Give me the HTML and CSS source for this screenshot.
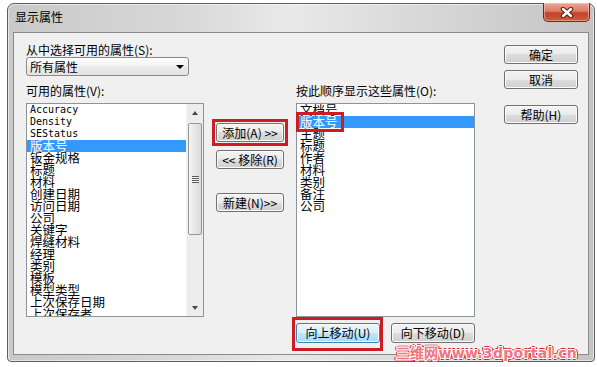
FILE: index.html
```html
<!DOCTYPE html>
<html lang="zh-CN">
<head>
    <meta charset="UTF-8">
    <title>显示属性</title>
    <link rel="stylesheet" href="styles.css">
</head>
<body>
    <div class="window">
        <div class="titlebar">
            <span class="title">显示属性</span>
            <span class="close">
                <svg width="14" height="11" viewBox="0 0 14 11">
                    <path d="M3 2 L11 9 M11 2 L3 9" stroke="#5a1c12" stroke-width="4.4" stroke-linecap="round"/>
                    <path d="M3 2 L11 9 M11 2 L3 9" stroke="#fff" stroke-width="2.4" stroke-linecap="round"/>
                </svg>
            </span>
        </div>
        <div class="client">
            <div class="main">
                <div class="picker">
                    <label>从中选择可用的属性(S):</label>
                    <div class="combo"><span>所有属性</span><span class="caret"></span></div>
                </div>
                <div class="lists">
                    <div class="cap">可用的属性(V):</div>
                    <div class="cap cap-right">按此顺序显示这些属性(O):</div>

                    <div class="listbox scrolled">
                        <ul class="items">
                            <li class="en">Accuracy</li>
                            <li class="en">Density</li>
                            <li class="en">SEStatus</li>
                            <li class="sel">版本号</li>
                            <li>钣金规格</li>
                            <li>标题</li>
                            <li>材料</li>
                            <li>创建日期</li>
                            <li>访问日期</li>
                            <li>公司</li>
                            <li>关键字</li>
                            <li>焊缝材料</li>
                            <li>经理</li>
                            <li>类别</li>
                            <li>模板</li>
                            <li>模型类型</li>
                            <li>上次保存日期</li>
                            <li>上次保存者</li>
                        </ul>
                        <div class="vscroll">
                            <span class="arrow"><span class="tri-up"></span></span>
                            <span class="thumb"><span class="grip"></span></span>
                            <span class="track"></span>
                            <span class="arrow"><span class="tri-down"></span></span>
                        </div>
                    </div>

                    <div class="mid">
                        <span class="mark mark-add"><button class="btn btn-mid">添加(A) &gt;&gt;</button></span>
                        <button class="btn btn-mid btn-remove">&lt;&lt; 移除(R)</button>
                        <button class="btn btn-mid btn-new">新建(N)&gt;&gt;</button>
                    </div>

                    <div class="listbox">
                        <ul class="items">
                            <li>文档号</li>
                            <li class="sel mark mark-row">版本号</li>
                            <li>主题</li>
                            <li>标题</li>
                            <li>作者</li>
                            <li>材料</li>
                            <li>类别</li>
                            <li>备注</li>
                            <li>公司</li>
                        </ul>
                    </div>

                    <div class="moves">
                        <span class="mark mark-up"><button class="btn btn-move hot">向上移动(U)</button></span>
                        <button class="btn btn-move">向下移动(D)</button>
                    </div>
                </div>
            </div>
            <div class="side">
                <button class="btn btn-side">确定</button>
                <button class="btn btn-side">取消</button>
                <button class="btn btn-side btn-help">帮助(H)</button>
            </div>
        </div>
        <div class="watermark">三维网www.3dportal.cn</div>
    </div>
</body>
</html>
```

FILE: styles.css
```css
body {
    margin: 0;
    background-color: #fff;
    font-family: "Noto Sans CJK SC", "Noto Sans", sans-serif;
    font-size: 12px;
    color: #000;
}

.window {
    position: relative;
    width: 588px;
    height: 359px;
    margin: 3px 0 0 7px;
    box-sizing: border-box;
    border: 1px solid #5e5e5e;
    border-radius: 7px 7px 4px 4px;
    background: linear-gradient(90deg, #c9c9c9 0%, #d8d8d8 30%, #e9e9e9 48%, #dadada 68%, #c4c4c4 100%);
    box-shadow: inset 0 0 0 1px rgba(255, 255, 255, 0.55);
    display: flex;
    flex-direction: column;
}

.titlebar {
    height: 28px;
    display: flex;
    justify-content: space-between;
    align-items: flex-start;
    padding-left: 7px;
}

.title {
    line-height: 12px;
    margin-top: 7px;
}

.close {
    width: 47px;
    height: 19px;
    margin: -1px 4px 0 0;
    box-sizing: border-box;
    border: 1px solid #6b2a20;
    border-top: none;
    border-radius: 0 0 5px 5px;
    background: linear-gradient(#eaa898 0%, #dc7d64 45%, #c4432a 55%, #cc5a3e 100%);
    box-shadow: inset 0 0 0 1px rgba(255, 210, 200, 0.5);
    display: flex;
    align-items: center;
    justify-content: center;
}

.client {
    flex: 1;
    margin: 0 5px 6px 5px;
    border: 1px solid #8a8a8a;
    background-color: #f0f0f0;
    display: flex;
    padding: 11px 0 0 12px;
}

.main {
    width: 449px;
    display: flex;
    flex-direction: column;
}

.picker label {
    display: block;
    line-height: 12px;
}

.combo {
    width: 163px;
    height: 19px;
    margin-top: 1px;
    box-sizing: border-box;
    border: 1px solid #8a8a8a;
    border-radius: 3px;
    background: linear-gradient(#fdfdfd 0%, #f3f3f3 50%, #ebebeb 50%, #e4e4e4 100%);
    display: flex;
    align-items: center;
    justify-content: space-between;
    padding: 0 4px 0 3px;
    line-height: 12px;
}

.caret {
    width: 0;
    height: 0;
    border-left: 4px solid transparent;
    border-right: 4px solid transparent;
    border-top: 4px solid #000;
}

.lists {
    margin-top: 9px;
    display: grid;
    grid-template-columns: 178px 92px 179px;
    grid-template-rows: 12px 214px 20px;
    row-gap: 6px;
}

.cap {
    line-height: 12px;
}

.cap-right {
    grid-column: 3;
}

.listbox {
    position: relative;
    border: 1px solid #8e9299;
    background-color: #fff;
    box-sizing: border-box;
    display: flex;
}

.items {
    list-style: none;
    margin: 0;
    padding: 0;
    flex: 1;
}

.scrolled .items {
    overflow: hidden;
}

.items li {
    height: 12px;
    line-height: 12px;
    padding-left: 3px;
    font-size: 12.5px;
    white-space: nowrap;
}

.items li.en {
    font-family: "DejaVu Sans Mono", monospace;
    font-size: 10px;
}

.items li.sel {
    background-color: #3399ff;
    color: #fff;
}

.vscroll {
    width: 16px;
    display: flex;
    flex-direction: column;
    background-color: #ededed;
    border-left: 1px solid #f4f4f4;
}

.arrow {
    height: 17px;
    display: flex;
    align-items: center;
    justify-content: center;
}

.tri-up, .tri-down {
    width: 0;
    height: 0;
    border-left: 3px solid transparent;
    border-right: 3px solid transparent;
}

.tri-up {
    border-bottom: 4px solid #4a4a4a;
}

.tri-down {
    border-top: 4px solid #4a4a4a;
}

.thumb {
    height: 112px;
    margin: 2px 1px 0 1px;
    border: 1px solid #979797;
    border-radius: 2px;
    box-sizing: border-box;
    background: linear-gradient(90deg, #f4f4f4, #e6e6e6 50%, #d9d9d9);
    display: flex;
    align-items: center;
    justify-content: center;
}

.grip {
    width: 7px;
    height: 7px;
    background: repeating-linear-gradient(#5a5a5a 0 1px, #f6f6f6 1px 2px);
}

.track {
    flex: 1;
}

.mid {
    display: flex;
    flex-direction: column;
    align-items: center;
    padding-top: 20px;
}

.btn {
    padding: 0;
    box-sizing: border-box;
    border: 1px solid #707070;
    border-radius: 3px;
    background: linear-gradient(#f3f3f3 0%, #ebebeb 50%, #dddddd 50%, #cfcfcf 100%);
    box-shadow: inset 0 0 0 1px #fbfbfb;
    font-family: "Noto Sans CJK SC", "Noto Sans", sans-serif;
    font-size: 12px;
    line-height: 12px;
    color: #000;
    white-space: nowrap;
}

.btn.hot {
    border-color: #3c7fb1;
    background: linear-gradient(#eaf6fd 0%, #d9f0fc 50%, #bee6fd 50%, #a7d9f5 100%);
}

.btn-mid {
    display: block;
    width: 68px;
    height: 19px;
}

.btn-remove {
    margin-top: 8px;
}

.btn-new {
    margin-top: 24px;
}

.moves {
    grid-column: 3;
    display: flex;
    justify-content: space-between;
}

.btn-move {
    display: block;
    width: 84px;
    height: 20px;
}

.side {
    margin: 1px 0 0 29px;
    display: flex;
    flex-direction: column;
}

.btn-side {
    width: 74px;
    height: 19px;
    margin-bottom: 6px;
}

.btn-help {
    margin-top: 10px;
}

/* red highlight frames drawn over the screenshot */
.mark {
    position: relative;
    display: block;
}

.mark::after {
    content: "";
    position: absolute;
    border: 3px solid #cc1d26;
}

.mark-add::after {
    top: -4px;
    left: -4px;
    right: -4px;
    bottom: -4px;
}

.mark-up::after {
    top: -6px;
    left: -4px;
    right: -3px;
    bottom: -8px;
}

.mark-row::after {
    top: -4px;
    left: -1px;
    width: 48px;
    height: 20px;
    box-sizing: border-box;
}

.watermark {
    position: absolute;
    right: 17px;
    bottom: 1px;
    font-family: "DejaVu Sans", sans-serif;
    font-weight: bold;
    font-size: 14px;
    line-height: 13px;
    letter-spacing: 0.3px;
    color: #f27382;
    text-shadow: 1px 0 #fff, -1px 0 #fff, 0 1px #fff, 0 -1px #fff,
        1px 1px #fff, -1px -1px #fff, 1px -1px #fff, -1px 1px #fff,
        2px 0 #d3202e, -2px 0 #d3202e, 0 2px #d3202e, 0 -2px #d3202e,
        2px 1px #d3202e, -2px 1px #d3202e, 2px -1px #d3202e, -2px -1px #d3202e;
}
```
